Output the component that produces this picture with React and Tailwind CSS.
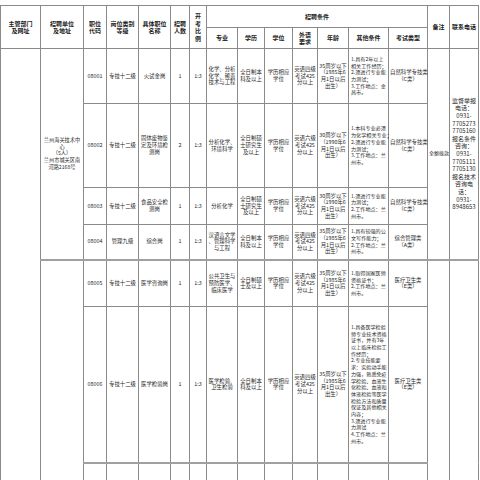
const cn = { fontFamily: '"Noto Sans CJK SC", "Noto Sans", sans-serif' };

const age35 = ["35周岁以下", "（1985年6", "月1日以后", "出生）"];
const age30 = ["30周岁以下", "（1990年6", "月1日以后", "出生）"];
const cet4 = ["英语四级", "考试425", "分以上"];
const cet6 = ["英语六级", "考试425", "分以上"];
const degree = ["学历相应", "学位"];

const rows = [
  {
    h: "h-[55px]",
    code: "08001", level: ["专技十二级"], name: ["火试金岗"], n: "1",
    major: ["化学、分析", "化学、稀贵", "技术与工程"],
    edu: ["全日制本", "科及以上"], lang: cet4, age: age35,
    other: ["1.具有2年以上", "相关工作经历；", "2.须进行专业能", "力测试；", "3.工作地点：金", "昌市。"],
    exam: ["自然科学专技类", "（C类）"],
  },
  {
    h: "h-[84px]",
    code: "08002", level: ["专技十二级"], name: ["固体废物鉴", "定及环境检", "测岗"], n: "2",
    major: ["分析化学、", "环境科学"],
    edu: ["全日制硕", "士研究生", "及以上"], lang: cet6, age: age30,
    other: ["1.本科专业必须", "为化学相关专业；", "2.须进行专业能", "力测试；", "3.工作地点：兰", "州市。"],
    exam: ["自然科学专技类", "（C类）"],
  },
  {
    h: "h-[37px]",
    code: "08003", level: ["专技十二级"], name: ["食品安全检", "测岗"], n: "1",
    major: ["分析化学"],
    edu: ["全日制硕", "士研究生", "及以上"], lang: cet6, age: age30,
    other: ["1.须进行专业能", "力测试；", "2.工作地点：兰", "州市。"],
    exam: ["自然科学专技类", "（C类）"],
  },
  {
    h: "h-[35px]",
    code: "08004", level: ["管理九级"], name: ["综合岗"], n: "1",
    major: ["汉语言文学", "、管理科学", "与工程"],
    edu: ["全日制本", "科及以上"], lang: cet4, age: age35,
    other: ["1.具有较强的公", "文写作能力；", "2.工作地点：兰", "州市。"],
    exam: ["综合管理类", "（A类）"],
  },
  {
    h: "h-[47px]",
    code: "08005", level: ["专技十二级"], name: ["医学咨询岗"], n: "1",
    major: ["公共卫生与", "预防医学、", "临床医学"],
    edu: ["全日制硕", "士及以上"], lang: cet6, age: age35,
    other: ["1.取得国家医师", "资格证书；", "2.工作地点：兰", "州市。"],
    exam: ["医疗卫生类", "（E类）"],
    thick: true,
  },
  {
    h: "h-[156px]",
    code: "08006", level: ["专技十二级"], name: ["医学检验岗"], n: "1",
    major: ["医学检验、", "卫生检验"],
    edu: ["全日制本", "科及以上"], lang: cet4, age: age35,
    other: [
      "1.具备医学检验", "师专业技术资格", "证书，并有3年", "以上临床检验工", "作经历；",
      "2.专业技能要", "求：实验动手能", "力强，熟悉免疫", "学检验、血液生", "化检验、血液和",
      "体液检验等医学", "检验方法和质量", "保证及其他相关", "内容；", "3.须进行专业能",
      "力测试", "4.工作地点：兰", "州市。",
    ],
    exam: ["医疗卫生类", "（E类）"],
  },
];

const widths = [40, 43, 23, 32, 32, 19, 17, 31, 27, 28, 25, 31, 40, 39, 22, 29];

function Lines({ items }) {
  return items.map((t, i) => (
    <div key={i} className="whitespace-nowrap">
      {t}
    </div>
  ));
}

const td = "border border-[#8a8a8a] px-[1px] align-middle text-center";
const thick = "border-t-2 border-t-[#a0a0a0]";
const th = "border border-[#8a8a8a] px-[1px] align-middle text-center font-bold text-[6px] leading-[7.5px] text-[#222]";

export default function App() {
  return (
    <div className="w-[480px] h-[480px] overflow-hidden bg-white pt-[5px]" style={cn}>
      <table className="table-fixed border-collapse w-[478px] text-[5.4px] leading-[6.7px] text-[#2a2a2a]">
        <colgroup>
          {widths.map((w, i) => (
            <col key={i} style={{ width: w }} />
          ))}
        </colgroup>
        <thead>
          <tr className="h-[22px]">
            <th rowSpan={2} className={th}>主管部门<br />及网址</th>
            <th rowSpan={2} className={th}>招聘单位<br />及地址</th>
            <th rowSpan={2} className={th}>职位<br />代码</th>
            <th rowSpan={2} className={th}>岗位类别<br />等级</th>
            <th rowSpan={2} className={th}>具体职位<br />名称</th>
            <th rowSpan={2} className={th}>招聘<br />人数</th>
            <th rowSpan={2} className={th}>开<br />考<br />比<br />例</th>
            <th colSpan={7} className={th}>招聘条件</th>
            <th rowSpan={2} className={th}>备注</th>
            <th rowSpan={2} className={th}>联系电话</th>
          </tr>
          <tr className="h-[21px]">
            <th className={th}>专业</th>
            <th className={th}>学历</th>
            <th className={th}>学位</th>
            <th className={th}>外语<br />要求</th>
            <th className={th}>年龄</th>
            <th className={th}>其他条件</th>
            <th className={th}>考试类型</th>
          </tr>
        </thead>
        <tbody>
          {rows.map((r, i) => {
            const c = r.thick ? `${td} ${thick}` : td;
            return (
              <tr key={r.code} className={r.h}>
                {i === 0 && <td rowSpan={7} className={td}></td>}
                {i === 0 && (
                  <td rowSpan={4} className={`${td} text-[5.2px]`}>
                    <Lines items={["兰州海关技术中", "心", "（5人）", "兰州市城关区南", "河路2168号"]} />
                  </td>
                )}
                {i === 4 && <td rowSpan={3} className={c}></td>}
                <td className={c}>{r.code}</td>
                <td className={c}><Lines items={r.level} /></td>
                <td className={c}><Lines items={r.name} /></td>
                <td className={c}>{r.n}</td>
                <td className={c}>1:3</td>
                <td className={c}><Lines items={r.major} /></td>
                <td className={c}><Lines items={r.edu} /></td>
                <td className={c}><Lines items={degree} /></td>
                <td className={c}><Lines items={r.lang} /></td>
                <td className={c}><Lines items={r.age} /></td>
                <td className={`${c} !text-left !px-[2px] text-[5.1px]`}><Lines items={r.other} /></td>
                <td className={c}><Lines items={r.exam} /></td>
                {i === 0 && (
                  <td rowSpan={4} className={`${td} text-[5px] whitespace-nowrap`}>
                    全额拨款
                  </td>
                )}
                {i === 0 && (
                  <td rowSpan={4} className={`${td} text-[6px] leading-[7.6px]`}>
                    <Lines
                      items={[
                        "监督举报", "电话：", "0931-", "7705273", "7705160",
                        "报名条件", "咨询：", "0931-", "7705111", "7705130",
                        "报名技术", "咨询电", "话：", "0931-", "8948653",
                      ]}
                    />
                  </td>
                )}
                {i === 4 && <td rowSpan={3} className={c}></td>}
                {i === 4 && <td rowSpan={3} className={c}></td>}
              </tr>
            );
          })}
          <tr className="h-[40px]">
            {Array.from({ length: 13 }).map((_, k) => (
              <td key={k} className={`${td} ${thick}`}></td>
            ))}
          </tr>
        </tbody>
      </table>
    </div>
  );
}
